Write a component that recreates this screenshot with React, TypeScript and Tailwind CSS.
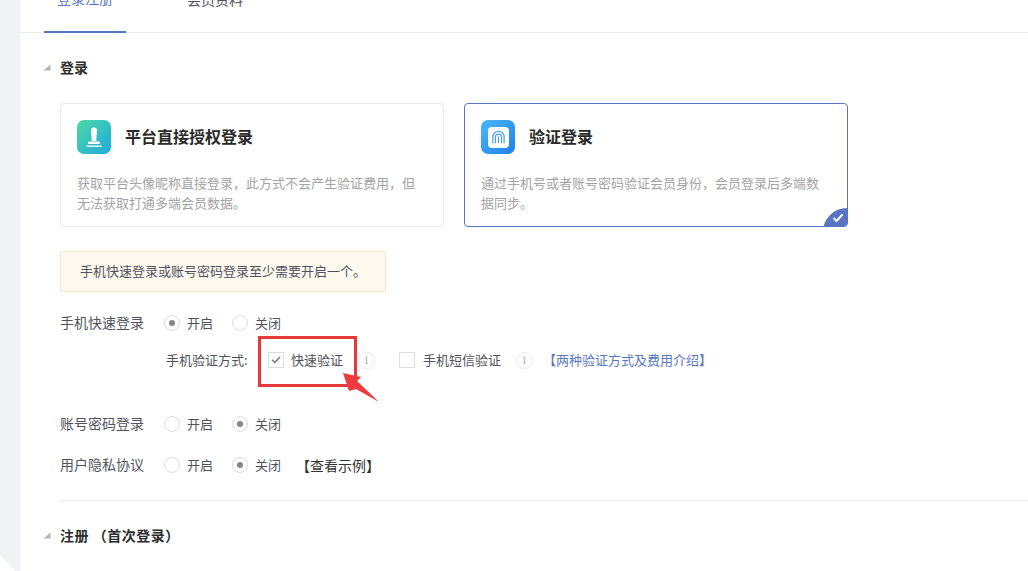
import React from "react";

const Triangle = () => (
  <svg width="8" height="7" viewBox="0 0 8 7" className="mr-[9px] shrink-0 -mt-px">
    <path d="M7.5 0.5V6.5H0.5Z" fill="#b4b4b4" />
  </svg>
);

const Radio = ({ checked, label }: { checked?: boolean; label: string }) => (
  <div className="flex items-center">
    <span className="w-4 h-4 rounded-full border border-[#dcdee2] bg-white flex items-center justify-center">
      {checked && <span className="w-[6px] h-[6px] rounded-full bg-[#85858c]" />}
    </span>
    <span className="ml-[7px] text-[13px] text-[#50535c]">{label}</span>
  </div>
);

const Info = ({ className }: { className: string }) => (
  <span
    className={
      "w-[17px] h-[17px] rounded-full border border-[#ebebeb] flex items-center justify-center text-[12px] text-[#a8a8a8] [font-family:'Liberation_Serif',serif] " +
      className
    }
  >
    i
  </span>
);

const StampIcon = () => (
  <div className="w-[34px] h-[34px] rounded-[7px] bg-gradient-to-br from-[#4fd8a0] to-[#1fa9dc] shrink-0">
    <svg width="34" height="34" viewBox="0 0 34 34">
      <path d="M14 10.500a3 3 0 0 1 6 0c0 3-0.700 6-0.700 10.500h-4.600c0-4.500-0.700-7.500-0.700-10.500Z" fill="#fff" />
      <path d="M11 22.500q0-1 1-1h10q1 0 1 1V24H11Z" fill="#fff" />
      <path d="M9.500 25.500h15v1.500h-15Z" fill="#fff" />
    </svg>
  </div>
);

const FingerIcon = () => (
  <div className="w-[34px] h-[34px] rounded-[7px] bg-gradient-to-br from-[#4cb8f8] to-[#1e80ea] flex items-center justify-center shrink-0">
    <div className="w-[21px] h-[21px] rounded-[4px] bg-white flex items-center justify-center">
      <svg width="15" height="15" viewBox="0 0 16 16" fill="none" stroke="#4aa0ee" strokeWidth="1.300">
        <path d="M2 14V7.500a6 6 0 0 1 12 0V14" />
        <path d="M4.700 14V7.800a3.300 3.300 0 0 1 6.600 0V14" />
        <path d="M8 7v7" />
      </svg>
    </div>
  </div>
);

const LoginCard = ({
  icon,
  title,
  desc,
  active,
}: {
  icon: React.ReactNode;
  title: string;
  desc: React.ReactNode;
  active?: boolean;
}) => (
  <div
    className={
      "relative w-[384px] h-[124px] rounded-[4px] border bg-white px-4 pt-4 overflow-hidden " +
      (active ? "border-[#5a74c4]" : "border-[#e6e8eb]")
    }
  >
    <div className="flex items-center">
      {icon}
      <h3 className="ml-[14px] pb-[2px] text-base font-semibold text-[#2a2a2a]">{title}</h3>
    </div>
    <p className="mt-[19px] text-[13px] leading-[20px] text-[#a3a3a3]">{desc}</p>
    {active && (
      <>
        <span className="absolute -right-[8px] -bottom-[10px] w-[32px] h-[28px] rounded-tl-[24px] bg-[#5a74c4]" />
        <svg width="12" height="10" viewBox="0 0 12 10" className="absolute right-[3px] bottom-[3px]">
          <path d="M1.500 5l3 3 6-6.500" fill="none" stroke="#fff" strokeWidth="2" />
        </svg>
      </>
    )}
  </div>
);

export default function App() {
  return (
    <div className="w-[1028px] h-[571px] overflow-hidden flex bg-[#f1f2f4] relative text-[#50535c] [font-family:'Noto_Sans_CJK_SC','Liberation_Sans',sans-serif]">
      <div className="w-5 shrink-0 relative">
        <svg width="16" height="16" viewBox="0 0 16 16" className="absolute left-0 bottom-0">
          <path d="M0 0L15 16H0Z" fill="#fff" />
        </svg>
      </div>

      <div className="flex-1 bg-white">
        {/* tabs, scrolled past the top edge */}
        <div className="h-[66px] -mt-[33px] border-b border-[#e8eaec] flex pl-[24px] items-stretch">
          <div className="w-[82px] pb-[2px] flex items-center justify-center text-sm text-[#5a74c4] border-b-2 border-[#5a74c4] -mb-px">
            登录注册
          </div>
          <div className="ml-[61px] w-[56px] pb-[2px] flex items-center justify-center text-sm text-[#50535c] whitespace-nowrap">
            会员资料
          </div>
        </div>

        <div className="pl-[23px]">
          <div className="flex items-center h-5 mt-[25px]">
            <Triangle />
            <h2 className="pb-[2px] text-sm font-semibold text-[#2d2d2d]">登录</h2>
          </div>

          <div className="pl-[17px]">
            <div className="flex gap-5 mt-[25px]">
              <LoginCard
                icon={<StampIcon />}
                title="平台直接授权登录"
                desc={
                  <>
                    获取平台头像昵称直接登录，此方式不会产生验证费用，但
                    <br />
                    无法获取打通多端会员数据。
                  </>
                }
              />
              <LoginCard
                active
                icon={<FingerIcon />}
                title="验证登录"
                desc={
                  <>
                    通过手机号或者账号密码验证会员身份，会员登录后多端数
                    <br />
                    据同步。
                  </>
                }
              />
            </div>

            <div className="mt-[24px] w-[326px] h-[41px] flex items-center pl-[19px] pb-[2px] rounded-[2px] border border-[#f7e6c8] bg-[#fef9ef] text-[13px] text-[#50535c]">
              手机快速登录或账号密码登录至少需要开启一个。
            </div>

            <div className="flex items-center h-5 mt-[21px]">
              <span className="w-[104px] pb-[2px] text-sm">手机快速登录</span>
              <Radio checked label="开启" />
              <div className="ml-[19px]">
                <Radio label="关闭" />
              </div>
            </div>

            <div className="flex items-center h-5 mt-[17px] pl-[106px] relative">
              <span className="w-[90px] text-[13px] whitespace-nowrap">手机验证方式:</span>
              <span className="ml-[12px] w-4 h-4 border border-[#dcdee2] flex items-center justify-center">
                <svg width="10" height="8" viewBox="0 0 10 8">
                  <path d="M1 3.800l2.800 2.700L9 1" fill="none" stroke="#777" strokeWidth="1.500" />
                </svg>
              </span>
              <span className="ml-[7px] text-[13px]">快速验证</span>
              <Info className="ml-[15px]" />
              <span className="ml-6 w-4 h-4 border border-[#dcdee2]" />
              <span className="ml-2 text-[13px]">手机短信验证</span>
              <Info className="ml-[15px]" />
              <span className="ml-[10px] text-[13px] text-[#5a78c0] whitespace-nowrap">【两种验证方式及费用介绍】</span>
            </div>

            <div className="flex items-center h-5 mt-[44px]">
              <span className="w-[104px] pb-[2px] text-sm">账号密码登录</span>
              <Radio label="开启" />
              <div className="ml-[19px]">
                <Radio checked label="关闭" />
              </div>
            </div>

            <div className="flex items-center h-5 mt-[21px]">
              <span className="w-[104px] pb-[2px] text-sm">用户隐私协议</span>
              <Radio label="开启" />
              <div className="ml-[19px]">
                <Radio checked label="关闭" />
              </div>
              <span className="ml-[15px] text-sm text-[#333]">【查看示例】</span>
            </div>

            <div className="h-px bg-[#e8eaec] mt-[25px]" />
          </div>

          <div className="flex items-center h-5 mt-[25px]">
            <Triangle />
            <h2 className="pb-[2px] text-sm font-semibold text-[#2d2d2d] tracking-[0.5px] whitespace-pre">注册 （首次登录）</h2>
          </div>
        </div>
      </div>

      {/* red annotation drawn on top of the page */}
      <div className="absolute left-[258px] top-[336px] w-[99px] h-[51px] border-[3px] border-[#e53a3c]" />
      <svg width="44" height="36" viewBox="0 0 44 36" className="absolute left-[340px] top-[370px]">
        <path d="M3 3L21 7L17 11L39 32L16 19L9 21Z" fill="#ee3b3b" />
      </svg>
    </div>
  );
}
